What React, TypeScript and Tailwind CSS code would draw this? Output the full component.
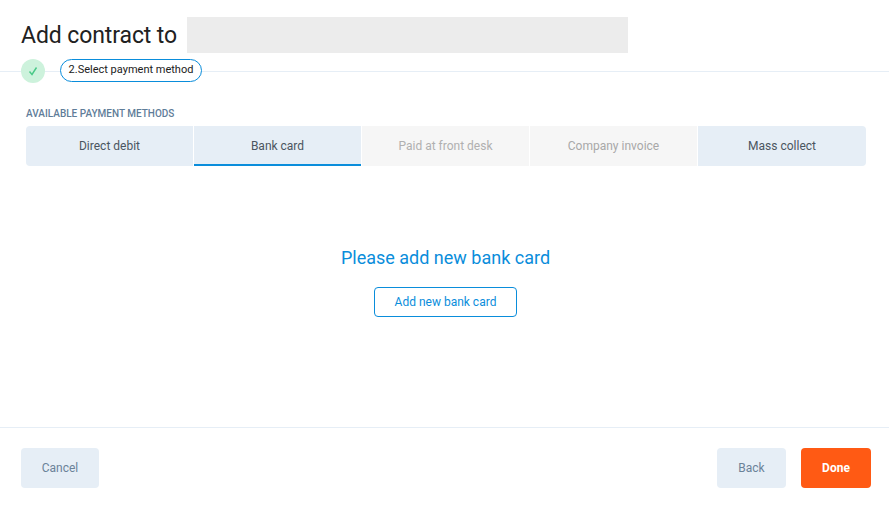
export default function App() {
  const tabs = [
    { label: "Direct debit", cls: "w-[167px] bg-[#e6eef6] text-[#4a5560] rounded-l-[4px]" },
    { label: "Bank card", cls: "w-[167px] bg-[#e6eef6] text-[#4a5560] border-y-2 border-t-transparent border-b-[#0a8ddb]" },
    { label: "Paid at front desk", cls: "w-[167px] bg-[#f6f6f6] text-[#b0b0b0]" },
    { label: "Company invoice", cls: "w-[167px] bg-[#f6f6f6] text-[#a8a8a8]" },
    { label: "Mass collect", cls: "flex-1 bg-[#e6eef6] text-[#4a5560] rounded-r-[4px]" },
  ];
  return (
    <div className="w-[889px] h-[508px] bg-white flex flex-col font-['Roboto',sans-serif] overflow-hidden">
      <header className="h-[72px] shrink-0 border-b border-[#e6eef6] pt-[17px]">
        <div className="flex items-center h-[36px] pl-[21px]">
          <h1 className="w-[166px] pt-[1px] text-[23px] leading-[36px] font-normal text-[#212121] tracking-[-0.1px]">Add contract to</h1>
          <div className="w-[441px] h-[36px] bg-[#ececec]" />
        </div>
        <div className="relative flex items-start h-[24px] mt-[6px] pl-[21px]">
          <div className="w-[24px] h-[24px] rounded-full bg-[#cdf2dc] flex items-center justify-center">
            <svg width="10" height="10" viewBox="0 0 10 10" fill="none" stroke="#48c987" strokeWidth="1.4">
              <path d="M1.5 5.5 L4 8.5 L8.5 1.5" />
            </svg>
          </div>
          <div className="ml-[15px] w-[142px] h-[23px] rounded-full border border-[#0a8ddb] bg-white flex items-center justify-center text-[11px] text-[#212121]">
            2.Select payment method
          </div>
        </div>
      </header>
      <main className="flex-1 flex flex-col pl-[26px] pr-[23px]">
        <div className="mt-[35px] h-[14px] text-[10px] leading-[14px] font-medium text-[#5f7d99] uppercase">
          Available payment methods
        </div>
        <div className="mt-[5px] flex gap-[1px] h-[40px]">
          {tabs.map((t) => (
            <div key={t.label} className={`flex items-center justify-center text-[12px] ${t.cls}`}>
              {t.label}
            </div>
          ))}
        </div>
        <div className="flex flex-col items-center pr-[1px]">
          <div className="mt-[80px] text-[18px] leading-[24px] text-[#0a8ddb]">Please add new bank card</div>
          <button className="mt-[17px] w-[143px] h-[30px] rounded-[4px] border border-[#0a8ddb] text-[12px] text-[#0a8ddb] bg-white">
            Add new bank card
          </button>
        </div>
      </main>
      <footer className="h-[81px] shrink-0 border-t border-[#e6eef6] flex items-start pt-[20px] pl-[21px] pr-[18px]">
        <button className="w-[78px] h-[40px] rounded-[4px] bg-[#e6eef6] text-[12px] text-[#6b8299]">Cancel</button>
        <button className="ml-auto w-[69px] h-[40px] rounded-[4px] bg-[#e6eef6] text-[12px] text-[#6b8299]">Back</button>
        <button className="ml-[15px] w-[70px] h-[40px] rounded-[4px] bg-[#ff5a14] text-[12px] font-bold text-white">Done</button>
      </footer>
    </div>
  );
}
